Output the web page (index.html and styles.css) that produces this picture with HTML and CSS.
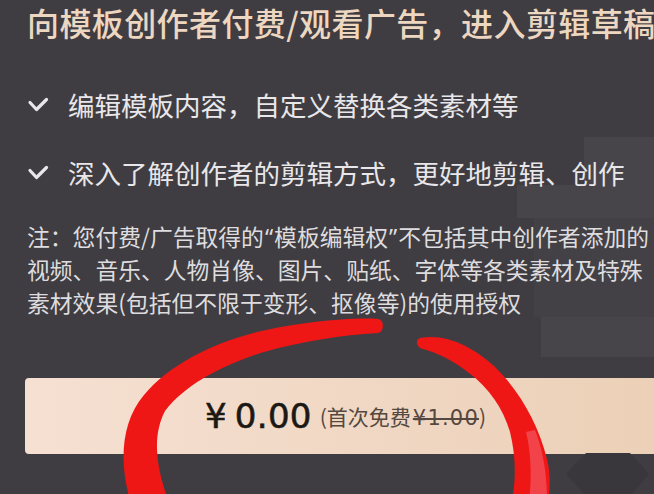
FILE: index.html
```html
<!DOCTYPE html>
<html lang="zh-CN">
<head>
<meta charset="utf-8">
<title>模板编辑权</title>
<link rel="stylesheet" href="styles.css">
</head>
<body>
<main class="sheet">
  <h1 class="title">向模板创作者付费/观看广告，进入剪辑草稿</h1>
  <ul class="features">
    <li class="feature">
      <svg class="check" viewBox="0 0 22 16" width="22" height="16"><path d="M3 5.5 L9.5 12.5 L19.5 2.5" /></svg>
      <span>编辑模板内容，自定义替换各类素材等</span>
    </li>
    <li class="feature">
      <svg class="check" viewBox="0 0 22 16" width="22" height="16"><path d="M3 5.5 L9.5 12.5 L19.5 2.5" /></svg>
      <span>深入了解创作者的剪辑方式，更好地剪辑、创作</span>
    </li>
  </ul>
  <p class="note">
    <span class="note-line">注：您付费/广告取得的<span class="q">“</span>模板编辑权<span class="q">”</span>不包括其中创作者添加的</span>
    <span class="note-line">视频、音乐、人物肖像、图片、贴纸、字体等各类素材及特殊</span>
    <span class="note-line">素材效果(包括但不限于变形、抠像等)的使用授权</span>
  </p>
  <div class="pay">
    <span class="amount"><span class="yen">¥</span>0.00</span>
    <span class="sub">(首次免费<s class="old">¥1.00</s>)</span>
  </div>
</main>
<svg class="annot" viewBox="0 0 654 494" width="654" height="494">
  <path class="blob" d="M586 453 L630 453 L649 474 L632 494 L584 494 L566 474 Z"/>
  <path class="ink" d="M378 319 C352 317 300 322 257 332 C210 344 168 366 144 395 C121 422 119 462 130 500 L168 500 C156 466 152 436 165 411 C185 385 222 365 264 352 C303 341 342 335 378 333 C384 332 385 320 378 319 Z"/>
  <path class="ink" d="M420 338 C446 333 473 347 494 366 C519 390 538 423 547 459 C551 475 550 490 548 500 L512 500 C516 480 516 456 510 432 C503 408 489 388 469 373 C454 361 438 353 423 349 C416 347 415 340 420 338 Z"/>
  <path class="ink-soft" d="M535 430 C542 448 547 470 547 500 L529 500 C532 478 531 452 526 432 Z"/>
</svg>
</body>
</html>
```

FILE: styles.css
```css
html, body {
  margin: 0;
  padding: 0;
}

body {
  width: 654px;
  height: 494px;
  overflow: hidden;
  position: relative;
  background-color: #3f3d41;
  background-image:
    linear-gradient(#47454a, #47454a),
    linear-gradient(#47454a, #47454a),
    linear-gradient(#434145, #434145),
    linear-gradient(#47454a, #47454a);
  background-repeat: no-repeat;
  background-position: 584px 137px, 517px 185px, 534px 218px, 541px 317px;
  background-size: 70px 48px, 137px 33px, 120px 99px, 113px 40px;
  font-family: "Noto Sans CJK SC", "Noto Sans", sans-serif;
}

.sheet {
  width: 654px;
  height: 494px;
  box-sizing: border-box;
  padding: 2px 0 0 27px;
  overflow: hidden;
}

.title {
  margin: 0;
  font-size: 32px;
  line-height: 40px;
  font-weight: 500;
  letter-spacing: 0.4px;
  color: #edd7c0;
  white-space: nowrap;
}

.features {
  list-style: none;
  margin: 28.5px 0 0;
  padding: 0;
}

.feature {
  display: flex;
  align-items: center;
  height: 68px;
  font-size: 26.5px;
  line-height: 30px;
  color: #e9e7ea;
  white-space: nowrap;
}

.check {
  flex: none;
  margin: 0 19px 0 0;
  fill: none;
  stroke: #e9e7ea;
  stroke-width: 3.2;
  stroke-linecap: round;
  stroke-linejoin: round;
}

.note {
  margin: 14px 0 0;
  font-size: 22.8px;
  line-height: 32.5px;
  color: #dedcdf;
}

.note-line {
  display: block;
  white-space: nowrap;
}

.q {
  font-family: "Noto Sans", sans-serif;
  margin: 0 1px;
}

.pay {
  margin: 59px 0 0 -2px;
  width: 641px;
  height: 76px;
  border-radius: 4px;
  background: linear-gradient(90deg, #f5e0d2 0%, #f1d9c6 45%, #ecd0b7 100%);
  display: flex;
  align-items: center;
  justify-content: center;
  color: #1c1814;
}

.amount {
  font-family: "DejaVu Sans", "Noto Sans", sans-serif;
  font-size: 34px;
  line-height: 40px;
  letter-spacing: 0.3px;
  -webkit-text-stroke: 0.6px #1c1814;
}

.yen {
  margin-right: 8px;
}

.sub {
  margin-left: 8px;
  margin-top: 2px;
  font-size: 21px;
  line-height: 30px;
  color: #554840;
}

.old {
  font-family: "DejaVu Sans", "Noto Sans", sans-serif;
  letter-spacing: 1.2px;
  margin-left: 2px;
  text-decoration-thickness: 1.5px;
}

.annot {
  position: absolute;
  left: 0;
  top: 0;
  pointer-events: none;
}

.blob {
  fill: #39373b;
}

.ink {
  fill: #ef1616;
}

.ink-soft {
  fill: #f3535c;
  opacity: 0.75;
}
```
